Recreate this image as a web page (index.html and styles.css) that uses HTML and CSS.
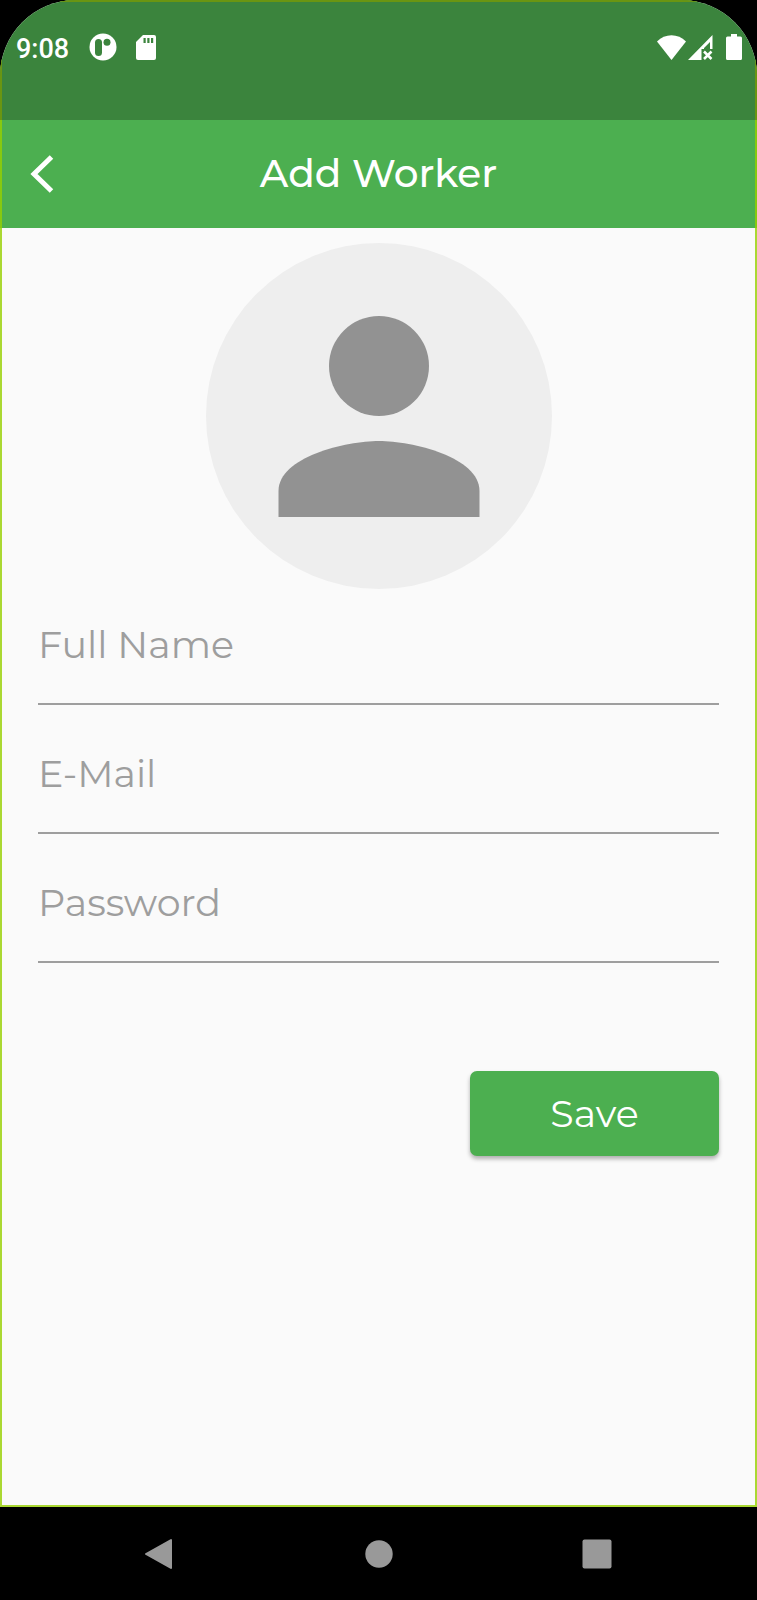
FILE: index.html
```html
<!DOCTYPE html>
<html lang="en">
<head>
<meta charset="utf-8">
<meta name="viewport" content="width=device-width, initial-scale=1">
<title>Add Worker</title>
<link rel="stylesheet" href="styles.css">
</head>
<body>
<div class="device">
  <div class="screen">
    <div class="status-bar">
      <div class="status-group">
        <span class="clock">9:08</span>
        <svg class="status-app" viewBox="0 0 28 28" aria-hidden="true">
          <circle class="fill-light" cx="14" cy="14" r="13.5"/>
          <rect class="fill-status" x="6" y="6" width="7" height="17" rx="3.5"/>
          <circle class="fill-status" cx="18" cy="9.3" r="3.5"/>
        </svg>
        <svg class="status-sd" viewBox="0 0 20 25" aria-hidden="true">
          <path class="fill-light" d="M7 0H18Q20 0 20 2V23Q20 25 18 25H2Q0 25 0 23V7Z"/>
          <path class="fill-status" d="M7.500 3h2.200v5H7.500zM11.300 3h2.200v5h-2.200zM15 3h2.200v5H15z"/>
        </svg>
      </div>
      <div class="status-group">
        <svg class="status-wifi" viewBox="0 0 29 25" aria-hidden="true">
          <path class="fill-light" d="M0 6.500C8-2 21-2 29 6.500L14.500 25Z"/>
        </svg>
        <svg class="status-signal" viewBox="0 0 25 25" aria-hidden="true">
          <path class="fill-light" fill-rule="evenodd" d="M0 25L24.500 0V14H22V7L16 13V14H13.500V25Z"/>
          <path class="signal-cross" d="M16 16.500l7.500 7.500M23.500 16.500l-7.500 7.500"/>
        </svg>
        <svg class="status-battery" viewBox="0 0 16 26" aria-hidden="true">
          <path class="fill-light" d="M5 0H11V2.500H14.500Q16 2.500 16 4V24.500Q16 26 14.500 26H1.500Q0 26 0 24.500V4Q0 2.500 1.500 2.500H5Z"/>
        </svg>
      </div>
    </div>
    <header class="app-bar">
      <button class="back" type="button" aria-label="Back">
        <svg viewBox="0 0 24 38" aria-hidden="true"><path d="M21.500 2L4 19L21.500 36"/></svg>
      </button>
      <h1 class="title">Add Worker</h1>
    </header>
    <main class="content">
      <svg class="avatar" viewBox="0 0 346 346" role="img" aria-label="Worker photo">
        <circle class="avatar-back" cx="173" cy="173" r="173"/>
        <circle class="avatar-person" cx="173" cy="123" r="50"/>
        <path class="avatar-person" d="M72.500 274V248C72.500 214 140 198 173 198S273.500 214 273.500 248V274Z"/>
      </svg>
      <form class="form">
        <input class="field" type="text" placeholder="Full Name" aria-label="Full Name">
        <input class="field" type="email" placeholder="E-Mail" aria-label="E-Mail">
        <input class="field" type="password" placeholder="Password" aria-label="Password">
        <button class="save" type="button">Save</button>
      </form>
    </main>
  </div>
  <nav class="nav-bar" aria-label="System">
    <button class="nav-button" type="button" aria-label="Back">
      <svg viewBox="0 0 32 32" aria-hidden="true"><path class="nav-back" d="M26 2V30L1 16Z"/></svg>
    </button>
    <button class="nav-button" type="button" aria-label="Home">
      <svg viewBox="0 0 32 32" aria-hidden="true"><circle cx="16" cy="16" r="13.700"/></svg>
    </button>
    <button class="nav-button" type="button" aria-label="Recent apps">
      <svg viewBox="0 0 32 32" aria-hidden="true"><rect x="1.500" y="1.500" width="29" height="29" rx="2"/></svg>
    </button>
  </nav>
</div>
</body>
</html>
```
FILE: styles.css
```css
* { box-sizing: border-box; }

body {
  margin: 0;
  background: #000;
  font-family: Montserrat, Inter, sans-serif;
}

button, input {
  font: inherit;
  border: 0;
  padding: 0;
  background: none;
}

svg { display: block; }

.device {
  display: flex;
  flex-direction: column;
  min-height: 100vh;
}

.screen {
  position: relative;
  flex: 1;
  display: flex;
  flex-direction: column;
  overflow: hidden;
  border-radius: 76px 76px 0 0;
  background: #fafafa;
}

/* Lime outline drawn over the edges of the app */
.screen::after {
  content: "";
  position: absolute;
  inset: 0;
  border: 2px solid rgba(150, 208, 0, 0.8);
  pointer-events: none;
}

/* The system bar sits above the outline and dims it */
.status-bar {
  position: relative;
  z-index: 1;
  display: flex;
  justify-content: space-between;
  align-items: flex-start;
  height: 120px;
  padding: 31px 13px 0 14px;
  background: #3b843d;
  border: 2px solid #6a9512;
  border-bottom: 0;
}

.status-group {
  display: flex;
  align-items: center;
  height: 28px;
}

.clock {
  font-family: Roboto, sans-serif;
  font-size: 27px;
  font-weight: 500;
  line-height: 28px;
  padding-top: 3px;
  color: #fff;
}

.status-app { width: 28px; margin-left: 20px; }
.status-sd { width: 20px; margin-left: 19px; }
.status-wifi { width: 29px; }
.status-signal { width: 25px; margin-left: 2px; }
.status-battery { width: 16px; margin-left: 13px; }

.fill-light { fill: #fff; }
.fill-status { fill: #3b843d; }
.signal-cross { stroke: #fff; stroke-width: 2.5; }

.app-bar {
  display: grid;
  grid-template-columns: 84px 1fr 84px;
  align-items: center;
  height: 108px;
  background: #4caf50;
}

.back { padding-left: 30px; height: 84px; }
.back svg { width: 24px; height: 38px; }
.back path { fill: none; stroke: #fff; stroke-width: 5; }

.title {
  margin: 0;
  padding-bottom: 2px;
  text-align: center;
  font-size: 39px;
  font-weight: 500;
  line-height: 48px;
  color: #fff;
}

.content {
  display: flex;
  flex-direction: column;
  padding: 15px 38px;
}

.avatar {
  align-self: center;
  width: 346px;
  max-width: 100%;
  margin-bottom: 11px;
}

.avatar-back { fill: #eee; }
.avatar-person { fill: #929292; }

.form {
  display: flex;
  flex-direction: column;
  gap: 24px;
}

.field {
  width: 100%;
  height: 105px;
  padding: 20px 0 34px;
  border-bottom: 2px solid #9e9e9e;
  border-radius: 0;
  font-size: 38px;
  font-weight: 400;
  line-height: 48px;
  color: #333;
  outline: none;
}

.field::placeholder { color: #9e9e9e; opacity: 1; }

.save {
  align-self: flex-end;
  width: 249px;
  height: 85px;
  margin-top: 84px;
  border-radius: 7px;
  background: #4caf50;
  box-shadow: 0 3px 4px rgba(0, 0, 0, 0.3);
  font-size: 38px;
  font-weight: 400;
  color: #fff;
}

.nav-bar {
  display: flex;
  justify-content: center;
  align-items: center;
  gap: 186px;
  height: 93px;
}

.nav-button svg { width: 32px; height: 32px; fill: #999; }
.nav-back { stroke: #999; stroke-width: 2; stroke-linejoin: round; }
```
